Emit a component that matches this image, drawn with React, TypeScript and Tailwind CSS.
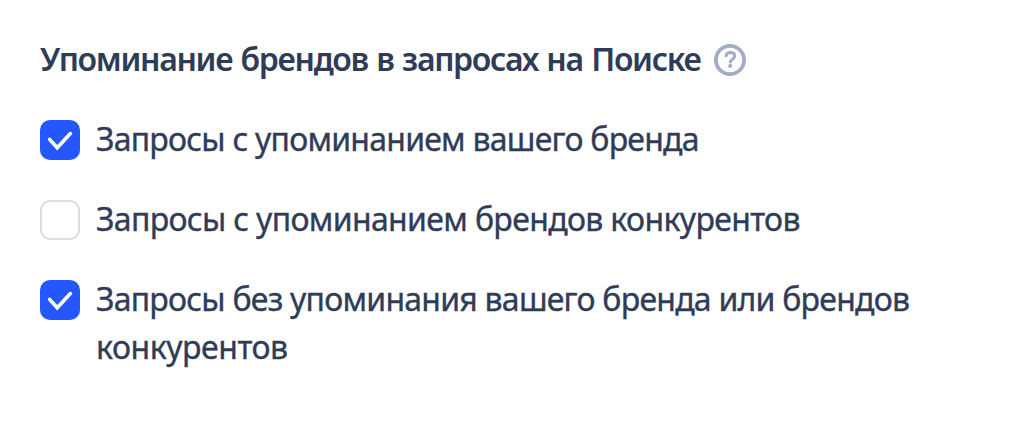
import { useState } from "react";

const OPTIONS = [
    { id: "own", lines: [{ text: "Запросы с упоминанием вашего бренда", className: "tracking-[-0.76px]" }] },
    { id: "rivals", lines: [{ text: "Запросы с упоминанием брендов конкурентов", className: "tracking-[-0.65px]" }] },
    {
        id: "none",
        lines: [
            { text: "Запросы без упоминания вашего бренда или брендов", className: "tracking-[-0.76px]" },
            { text: "конкурентов", className: "tracking-[-0.45px]" },
        ],
    },
];

function CheckBox({ checked }: { checked: boolean }) {
    if (!checked) {
        return <span className="mt-[5px] h-10 w-10 shrink-0 rounded-[10px] border-2 border-[#d9dce8] bg-white" />;
    }

    return (
        <span className="mt-[5px] flex h-10 w-10 shrink-0 items-center justify-center rounded-[10px] bg-[#2457ff]">
            <svg viewBox="0 0 40 40" className="h-10 w-10" fill="none" aria-hidden="true">
                <path d="M9.6 19.4L17.2 27.8L30.4 13.6" stroke="white" strokeWidth="3.6" strokeLinecap="round" strokeLinejoin="miter" />
            </svg>
        </span>
    );
}

function HelpIcon() {
    return (
        <svg viewBox="0 0 32 32" className="h-8 w-8 shrink-0" fill="none" aria-hidden="true">
            <circle cx="16" cy="16" r="14.1" stroke="#a3acc5" strokeWidth="3.8" />
            <path
                d="M12.2 11.8C12.4 9.6 13.9 8.4 16.3 8.4C18.9 8.4 20.8 9.8 20.8 12.1C20.8 15.1 16.3 15.2 16.3 18"
                stroke="#a3acc5"
                strokeWidth="3"
                strokeLinecap="round"
            />
            <circle cx="16.2" cy="22" r="2.1" fill="#a3acc5" />
        </svg>
    );
}

export default function App() {
    const [selected, setSelected] = useState<string[]>(["own", "none"]);

    const toggle = (id: string) => {
        setSelected((prev) => (prev.includes(id) ? prev.filter((item) => item !== id) : [...prev, id]));
    };

    return (
        <main className="h-[430px] w-[1026px] bg-white px-10 pt-[35px] font-['Noto_Sans',sans-serif] text-[#2f3c57]">
            <div className="flex h-12 items-start">
                <h1 className="w-[674px] shrink-0 whitespace-nowrap text-[32px] font-semibold leading-[48px] tracking-[-1.33px] [word-spacing:1.4px]">
                    Упоминание брендов в запросах на Поиске
                </h1>
                <button type="button" aria-label="Справка" className="mt-[9px]">
                    <HelpIcon />
                </button>
            </div>
            <div className="mt-8 flex flex-col gap-8">
                {OPTIONS.map((option) => (
                    <label key={option.id} className="relative flex cursor-pointer gap-4">
                        <input
                            type="checkbox"
                            checked={selected.includes(option.id)}
                            onChange={() => toggle(option.id)}
                            className="sr-only"
                        />
                        <CheckBox checked={selected.includes(option.id)} />
                        <span className="flex flex-col whitespace-nowrap text-[32px] leading-[48px] [-webkit-text-stroke:0.35px]">
                            {option.lines.map((line) => (
                                <span key={line.text} className={line.className}>
                                    {line.text}
                                </span>
                            ))}
                        </span>
                    </label>
                ))}
            </div>
        </main>
    );
}
